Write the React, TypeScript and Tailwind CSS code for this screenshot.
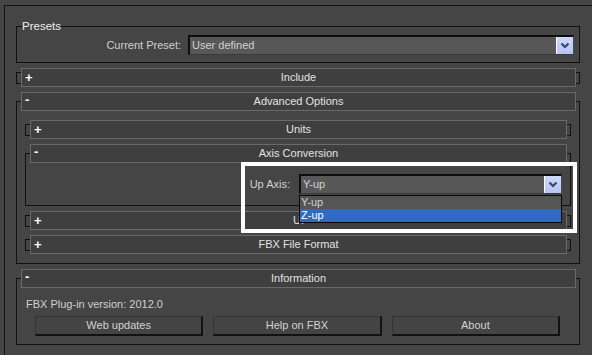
import { ReactNode } from 'react';

const FONT = "font-['Liberation_Sans','DejaVu_Sans',Arial,sans-serif]";

function Chevron() {
  return (
    <svg width="10" height="7" viewBox="0 0 10 7" className="block">
      <polyline points="1.5,1.5 5,5 8.5,1.5" fill="none" stroke="#3b4866" strokeWidth="2.2" />
    </svg>
  );
}

/** 3ds Max style combo: sunken field with a pale blue drop button. */
function Combo({ value, className = '' }: { value: string; className?: string }) {
  return (
    <div className={`h-[20px] flex items-stretch bg-[#585858] border-t-2 border-l-2 border-[#0e0e0e] border-b border-b-[#3a3a3a] border-r border-r-[#4a4a4a] ${className}`}>
      <span className="flex-1 pl-[2px] leading-[17px] text-[#d2d2d2]">{value}</span>
      <span className="w-[17px] flex items-center justify-center border-l border-white bg-gradient-to-b from-[#cdd8fb] to-[#b6c5f3]">
        <Chevron />
      </span>
    </div>
  );
}

function Bar({ title, open }: { title: string; open: boolean }) {
  return (
    <div className="relative ml-[5px] mr-[4px] h-[19px] border border-[#6a6a6a] bg-[#3f3f3f] grid grid-cols-[20px_1fr_20px] items-center">
      <span className={`pl-[3px] font-bold text-white ${open ? 'text-[13px] leading-[10px] -mt-[3px]' : 'text-[13px] leading-[13px]'}`}>{open ? '-' : '+'}</span>
      <span className="text-center text-[#e2e2e2] leading-[17px]">{title}</span>
      <span />
    </div>
  );
}

function Rollout({ title, open = false, children, className = '' }: {
  title: string; open?: boolean; children?: ReactNode; className?: string;
}) {
  if (!open) {
    // collapsed: only the little side brackets show past the title bar
    return (
      <div className={`relative ${className}`}>
        <div className="absolute inset-x-0 top-[4px] bottom-[3px] border border-[#111]" />
        <Bar title={title} open={false} />
      </div>
    );
  }
  return (
    <div className={`relative ${className}`}>
      <div className="absolute inset-x-0 top-[9px] bottom-0 border border-[#111]" />
      <Bar title={title} open />
      <div className="relative">{children}</div>
    </div>
  );
}

function Button({ label }: { label: string }) {
  return (
    <div className="h-[20px] flex items-center justify-center bg-[#444] border-t border-l border-[#343434] border-b-2 border-r-2 border-b-[#121212] border-r-[#121212] text-[#d2d2d2]">
      {label}
    </div>
  );
}

export default function App() {
  return (
    <div className={`relative w-[592px] h-[355px] overflow-hidden bg-[#454545] text-[11px] leading-[13px] text-[#dcdcdc] ${FONT}`}>
      <div className="mt-[5px] ml-[4px] h-[350px] border-t border-l border-[#111] pl-[11px] pr-[8px]">
        {/* Presets group */}
        <fieldset className="mt-[14px] w-[564px] border border-[#111] pr-[5px] pb-[7px]">
          <legend className="ml-[5px] text-[#ececec] text-[11.5px] leading-[13px]">Presets</legend>
          <div className="mt-[2px] flex items-center justify-end gap-[7px]">
            <span className="text-[#d0d0d0]">Current Preset:</span>
            <Combo value="User defined" className="w-[386px]" />
          </div>
        </fieldset>

        <div className="w-[564px]">
          <Rollout title="Include" className="mt-[5px]" />

          <Rollout title="Advanced Options" open className="mt-[5px]">
            <div className="px-[9px] pt-[9px] pb-[10px]">
              <Rollout title="Units" />
              <Rollout title="Axis Conversion" open className="mt-[5px]">
                <div className="h-[43px] pt-[11px] pr-[9px] flex justify-end items-start gap-[9px]">
                  <span className="leading-[20px] text-[#d0d0d0]">Up Axis:</span>
                  <div className="relative w-[263px]">
                    <Combo value="Y-up" />
                    <div className="absolute left-0 right-0 top-[21px] z-10 border border-[#0a0a0a] bg-[#555]">
                      <div className="h-[13px] pl-[1px] leading-[13px] text-[#cfcfcf]">Y-up</div>
                      <div className="h-[13px] pl-[1px] leading-[13px] bg-[#316ac5] text-white">Z-up</div>
                    </div>
                  </div>
                </div>
              </Rollout>
              <Rollout title="UI" className="mt-[5px]" />
              <Rollout title="FBX File Format" className="mt-[5px]" />
            </div>
          </Rollout>

          <Rollout title="Information" open className="mt-[5px]">
            <div className="pl-[10px] pt-[10px] text-[#d0d0d0]">FBX Plug-in version: 2012.0</div>
            <div className="mt-[5px] pl-[19px] pr-[20px] pb-[9px] grid grid-cols-3 gap-[10px]">
              <Button label="Web updates" />
              <Button label="Help on FBX" />
              <Button label="About" />
            </div>
          </Rollout>
        </div>
      </div>

      {/* annotation highlight */}
      <div className="absolute left-[241px] top-[162px] w-[336px] h-[71px] border-4 border-white z-20 pointer-events-none" />
    </div>
  );
}
